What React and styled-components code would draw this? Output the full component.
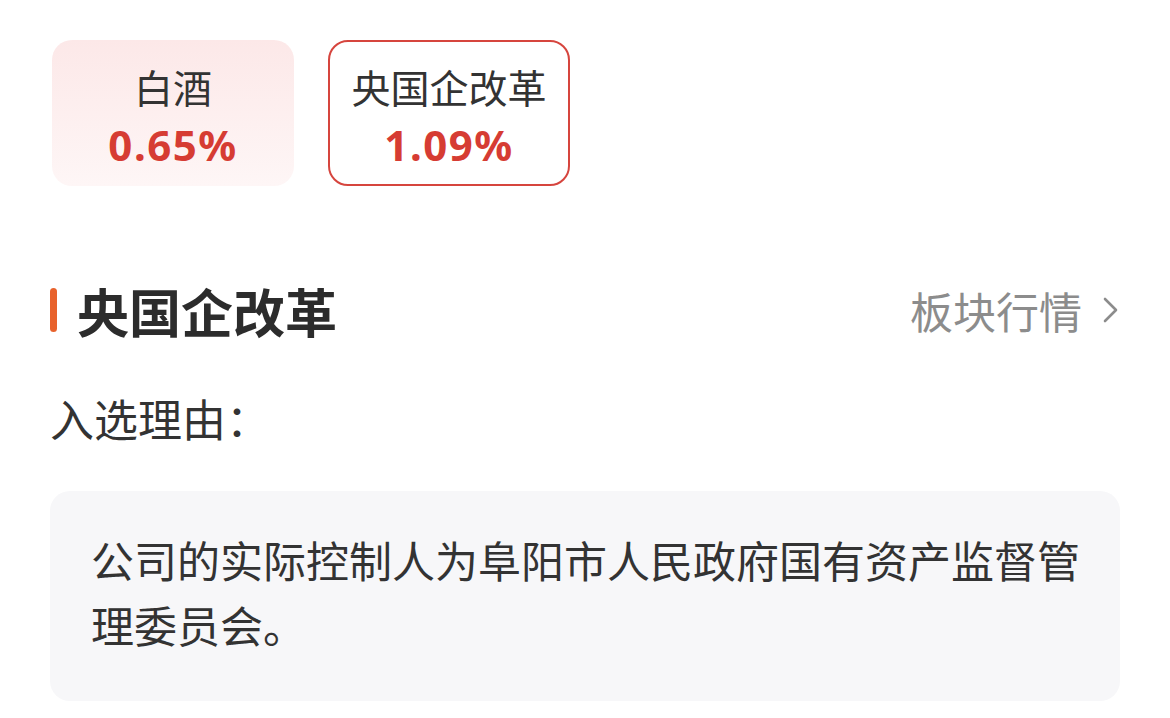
import React from 'react'
import styled, { createGlobalStyle } from 'styled-components'

const Global = createGlobalStyle`
  body {
    margin: 0;
    background: #fff;
    font-family: "Noto Sans CJK SC", "Noto Sans", sans-serif;
    color: #333;
  }
`

const Page = styled.div`
  padding: 40px 50px 0 50px;
  width: 1070px;
`

const CardRow = styled.div`
  display: flex;
  gap: 34px;
  padding-left: 2px;
`

const Card = styled.div`
  width: 242px;
  height: 146px;
  box-sizing: border-box;
  border-radius: 20px;
  padding-top: ${p => p.active ? '19px' : '21px'};
  display: flex;
  flex-direction: column;
  align-items: center;
  background: ${p => p.active ? '#fff' : 'linear-gradient(180deg, #fce8e8 0%, #fef6f6 100%)'};
  border: ${p => p.active ? '2px solid #d6453e' : 'none'};
`

const CardName = styled.div`
  font-size: 39px;
  line-height: 50px;
  color: #333;
`

const CardPct = styled.div`
  margin-top: 3px;
  font-family: "Noto Sans", "Liberation Sans", sans-serif;
  font-weight: 700;
  font-size: 42px;
  line-height: 62px;
  letter-spacing: 1.5px;
  color: #d63c33;
`

const Header = styled.div`
  display: flex;
  align-items: center;
  justify-content: space-between;
  margin-top: 94px;
  height: 60px;
`

const Title = styled.div`
  display: flex;
  align-items: center;
  gap: 20px;
  font-size: 52px;
  font-weight: 700;
  color: #2c2c2c;
`

const Bar = styled.span`
  width: 7px;
  height: 44px;
  border-radius: 4px;
  background: #e8622c;
`

const More = styled.div`
  display: flex;
  align-items: center;
  gap: 20px;
  font-size: 43px;
  color: #8c8c8c;
`

const Reason = styled.div`
  margin-top: 48px;
  font-size: 44px;
  line-height: 60px;
  color: #333;
`

const Box = styled.div`
  margin-top: 43px;
  background: #f7f7f9;
  border-radius: 20px;
  padding: 36px 30px 44px 41px;
  font-size: 43px;
  line-height: 65px;
  color: #333;
`

export default function App() {
  return (
    <Page>
      <Global />
      <CardRow>
        <Card>
          <CardName>白酒</CardName>
          <CardPct>0.65%</CardPct>
        </Card>
        <Card active>
          <CardName>央国企改革</CardName>
          <CardPct>1.09%</CardPct>
        </Card>
      </CardRow>
      <Header>
        <Title><Bar />央国企改革</Title>
        <More>
          板块行情
          <svg width="18" height="28" viewBox="0 0 18 28">
            <path d="M3 3 L14 14 L3 25" fill="none" stroke="#8c8c8c" strokeWidth="2.6" strokeLinecap="round" strokeLinejoin="round" />
          </svg>
        </More>
      </Header>
      <Reason>入选理由：</Reason>
      <Box>公司的实际控制人为阜阳市人民政府国有资产监督管理委员会。</Box>
    </Page>
  )
}
